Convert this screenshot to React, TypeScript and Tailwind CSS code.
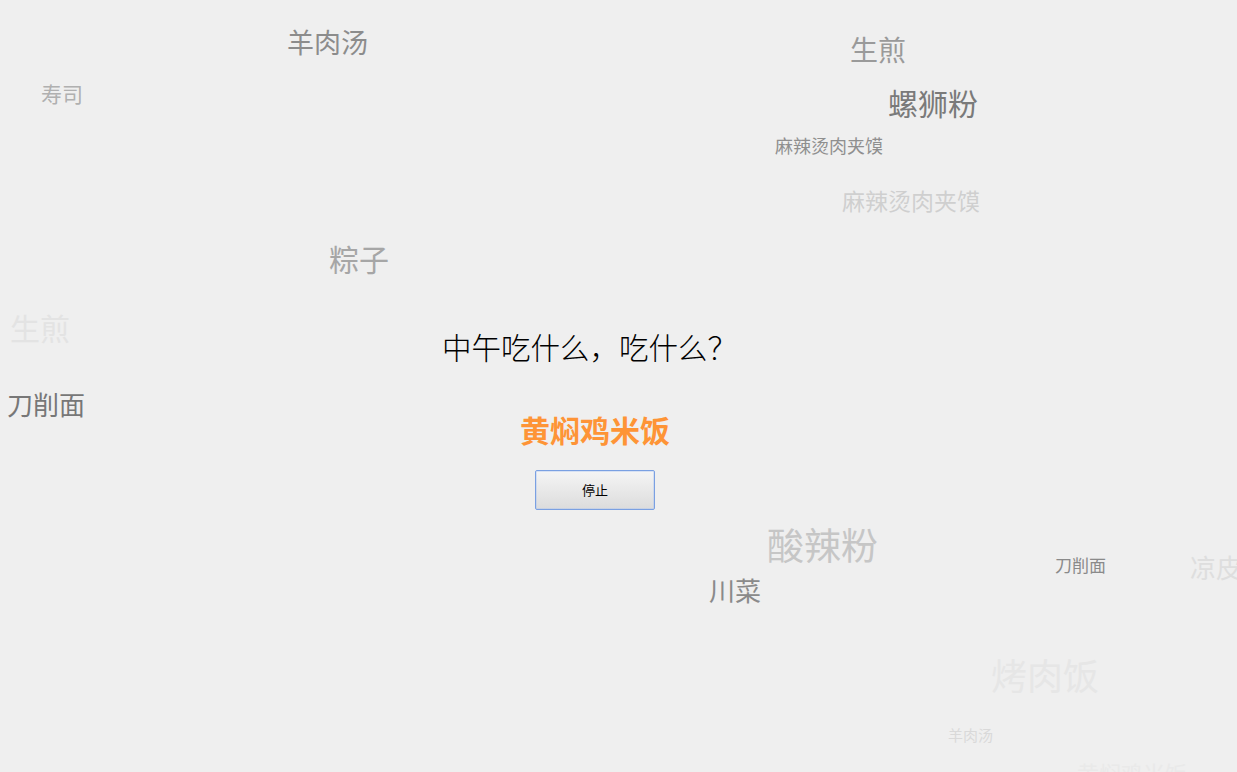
import React from "react";

const words: { text: string; cls: string }[] = [
  { text: "羊肉汤", cls: "left-[287px] top-[28px] text-[27px] text-[#8c8c8c]" },
  { text: "寿司", cls: "left-[41px] top-[83px] text-[21px] text-[#b0b0b0]" },
  { text: "生煎", cls: "left-[850px] top-[35px] text-[28px] text-[#9a9a9a]" },
  { text: "螺狮粉", cls: "left-[888px] top-[87px] text-[30px] text-[#7a7a7a]" },
  { text: "麻辣烫肉夹馍", cls: "left-[775px] top-[136px] text-[18px] text-[#8f8f8f]" },
  { text: "麻辣烫肉夹馍", cls: "left-[842px] top-[189px] text-[23px] text-[#cfcfcf]" },
  { text: "粽子", cls: "left-[329px] top-[243px] text-[30px] text-[#a6a6a6]" },
  { text: "生煎", cls: "left-[10px] top-[312px] text-[30px] text-[#e3e3e3]" },
  { text: "刀削面", cls: "left-[7px] top-[391px] text-[26px] text-[#777777]" },
  { text: "酸辣粉", cls: "left-[767px] top-[526px] text-[37px] text-[#c6c6c6]" },
  { text: "川菜", cls: "left-[709px] top-[577px] text-[26px] text-[#8a8a8a]" },
  { text: "刀削面", cls: "left-[1055px] top-[556px] text-[17px] text-[#8a8a8a]" },
  { text: "凉皮", cls: "left-[1190px] top-[554px] text-[26px] text-[#dedede]" },
  { text: "烤肉饭", cls: "left-[991px] top-[656px] text-[36px] text-[#e6e6e6]" },
  { text: "羊肉汤", cls: "left-[948px] top-[727px] text-[15px] text-[#d9d9d9]" },
  { text: "黄焖鸡米饭", cls: "left-[1077px] top-[761px] text-[22px] text-[#e9e9e9]" },
];

export default function App() {
  return (
    <div className="relative h-[772px] w-full overflow-hidden bg-[#efefef] font-['Noto_Sans_CJK_SC','Noto_Sans',sans-serif]">
      {words.map((w, i) => (
        <span
          key={i}
          className={`pointer-events-none absolute whitespace-nowrap leading-none ${w.cls}`}
        >
          {w.text}
        </span>
      ))}

      <div className="relative flex w-[1190px] flex-col items-center pt-[332px]">
        <h1 className="mr-[11px] text-[29.5px] font-light leading-none text-black">
          中午吃什么，吃什么？
        </h1>
        <div className="mt-[52px] text-[30px] font-bold leading-none text-[#fe9436]">
          黄焖鸡米饭
        </div>
        <button
          type="button"
          className="mt-[26px] flex h-[40px] w-[120px] items-center justify-center rounded-[2px] border border-[#7aa0e2] bg-gradient-to-b from-[#f5f5f5] to-[#dcdcdc] text-[13px] leading-none text-black shadow-[inset_0_0_0_1px_rgba(160,190,240,0.35)]"
        >
          停止
        </button>
      </div>
    </div>
  );
}
